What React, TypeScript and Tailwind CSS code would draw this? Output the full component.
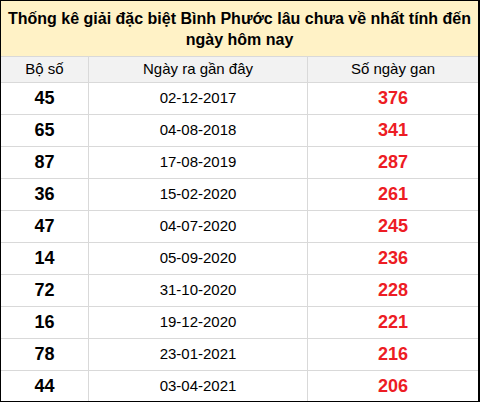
const rows = [
  ["45", "02-12-2017", "376"],
  ["65", "04-08-2018", "341"],
  ["87", "17-08-2019", "287"],
  ["36", "15-02-2020", "261"],
  ["47", "04-07-2020", "245"],
  ["14", "05-09-2020", "236"],
  ["72", "31-10-2020", "228"],
  ["16", "19-12-2020", "221"],
  ["78", "23-01-2021", "216"],
  ["44", "03-04-2021", "206"],
];

export default function App() {
  return (
    <div className="w-[480px] bg-white font-['Liberation_Sans',Arial,sans-serif] text-black">
      <div className="border border-black border-r-2">
        <div className="h-[56px] bg-[#fff2c6] border-b border-[#d9d9d9] flex flex-col items-center justify-center text-center text-[16px] font-bold leading-[21px] whitespace-nowrap">
          <span>Thống kê giải đặc biệt Bình Phước lâu chưa về nhất tính đến</span>
          <span>ngày hôm nay</span>
        </div>
        <div className="grid grid-cols-[88px_219px_1fr] h-[26px] bg-[#f2f2f2] border-b border-[#d9d9d9] text-[15px]">
          <div className="flex items-center justify-center border-r border-[#d9d9d9]">Bộ số</div>
          <div className="flex items-center justify-center border-r border-[#d9d9d9]">Ngày ra gần đây</div>
          <div className="flex items-center justify-center">Số ngày gan</div>
        </div>
        {rows.map(([num, date, gan], i) => (
          <div
            key={num}
            className={
              i < rows.length - 1
                ? "grid grid-cols-[88px_219px_1fr] h-[32px] border-b border-[#d9d9d9]"
                : "grid grid-cols-[88px_219px_1fr] h-[30px]"
            }
          >
            <div className="flex items-center justify-center border-r border-[#d9d9d9] text-[18px] font-bold">{num}</div>
            <div className="flex items-center justify-center border-r border-[#d9d9d9] text-[15px]">{date}</div>
            <div className="flex items-center justify-center text-[18px] font-bold text-[#ed1c24]">{gan}</div>
          </div>
        ))}
      </div>
    </div>
  );
}
